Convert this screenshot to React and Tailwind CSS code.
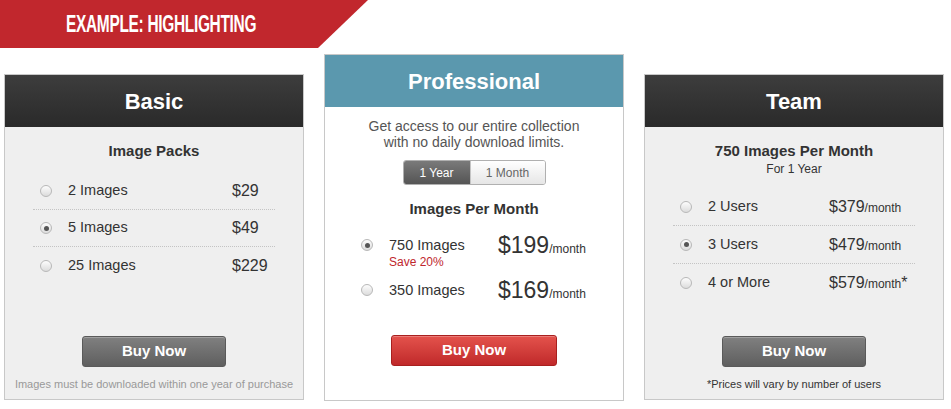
import React, { useState } from "react";

const font = { fontFamily: '"Liberation Sans", Arial, sans-serif' };

function Radio({ on }) {
  return (
    <span className="inline-flex items-center justify-center w-[12px] h-[12px] rounded-full border border-[#b8b8b8] bg-linear-to-b from-[#fdfdfd] to-[#dcdcdc] shrink-0">
      {on && <span className="w-[5px] h-[5px] rounded-full bg-[#555]" />}
    </span>
  );
}

function GrayButton({ className = "" }) {
  return (
    <button
      className={
        "h-[31px] rounded-[3px] border border-[#5a5a5a] bg-linear-to-b from-[#808080] to-[#5f5f5f] text-white font-bold text-[15px] shadow-[inset_0_1px_0_rgba(255,255,255,0.25)] " +
        className
      }
    >
      Buy Now
    </button>
  );
}

function DarkHeader({ title }) {
  return (
    <div className="h-[52px] bg-linear-to-b from-[#3d3d3d] to-[#2a2a2a] flex items-center justify-center">
      <span className="text-white font-bold text-[22px]">{title}</span>
    </div>
  );
}

export default function App() {
  const [basic, setBasic] = useState(1);
  const [pro, setPro] = useState(0);
  const [team, setTeam] = useState(1);
  const [term, setTerm] = useState("year");

  const basicRows = [
    ["2 Images", "$29"],
    ["5 Images", "$49"],
    ["25 Images", "$229"],
  ];
  const teamRows = [
    ["2 Users", "$379", ""],
    ["3 Users", "$479", ""],
    ["4 or More", "$579", "*"],
  ];

  return (
    <div className="w-[951px] h-[409px] bg-white overflow-hidden text-[#333]" style={font}>
      {/* banner */}
      <div className="w-[368px] h-[48px] bg-[#c1272d] [clip-path:polygon(0_0,368px_0,318px_100%,0_100%)] flex items-center pl-[66px]">
        <span className="text-white font-bold text-[24px] tracking-[-0.5px] inline-block origin-left scale-x-[0.645] whitespace-nowrap">
          EXAMPLE: HIGHLIGHTING
        </span>
      </div>

      <div className="flex items-start gap-[20px] pl-[4px] mt-[6px]">
        {/* Basic */}
        <div className="mt-[20px] w-[300px] h-[326px] border border-[#c8c8c8] bg-[#efefef] flex flex-col">
          <DarkHeader title="Basic" />
          <div className="flex-1 flex flex-col">
            <div className="pt-[14px] text-center font-bold text-[15px] leading-[20px]">Image Packs</div>
            <div className="mt-[12px] mx-[28px]">
              {basicRows.map(([label, price], i) => (
                <div
                  key={label}
                  onClick={() => setBasic(i)}
                  className={
                    "h-[37px] flex items-center pl-[7px] cursor-pointer " +
                    (i < 2 ? "border-b border-dotted border-[#c4c4c4]" : "")
                  }
                >
                  <Radio on={basic === i} />
                  <span className="ml-[16px] w-[164px] text-[14.5px]">{label}</span>
                  <span className="text-[16px]">{price}</span>
                </div>
              ))}
            </div>
            <div className="mt-auto flex justify-center">
              <GrayButton className="w-[144px]" />
            </div>
            <div className="mt-[10px] mb-[8px] text-center text-[11px] leading-[14px] text-[#999]">
              Images must be downloaded within one year of purchase
            </div>
          </div>
        </div>

        {/* Professional */}
        <div className="w-[300px] h-[347px] border border-[#c8c8c8] bg-white flex flex-col">
          <div className="h-[52px] bg-[#5b98ae] flex items-center justify-center">
            <span className="text-white font-bold text-[22px]">Professional</span>
          </div>
          <div className="flex-1 flex flex-col items-center">
            <div className="pt-[11px] text-center text-[14px] leading-[16px] text-[#555]">
              Get access to our entire collection
              <br />
              with no daily download limits.
            </div>
            <div className="mt-[10px] flex h-[25px] rounded-[3px] border border-[#b0b0b0] overflow-hidden text-[12px]">
              <button
                onClick={() => setTerm("year")}
                className={
                  "w-[66px] " +
                  (term === "year"
                    ? "bg-linear-to-b from-[#7a7a7a] to-[#555] text-white"
                    : "bg-linear-to-b from-white to-[#e6e6e6] text-[#666]")
                }
              >
                1 Year
              </button>
              <button
                onClick={() => setTerm("month")}
                className={
                  "w-[75px] border-l border-[#c4c4c4] " +
                  (term === "month"
                    ? "bg-linear-to-b from-[#7a7a7a] to-[#555] text-white"
                    : "bg-linear-to-b from-white to-[#e6e6e6] text-[#666]")
                }
              >
                1 Month
              </button>
            </div>
            <div className="mt-[14px] font-bold text-[15px] leading-[20px]">Images Per Month</div>
            <div className="self-stretch pl-[36px] mt-[17px]">
              <div className="flex items-start cursor-pointer" onClick={() => setPro(0)}>
                <div className="h-[18px] flex items-center">
                  <Radio on={pro === 0} />
                </div>
                <div className="ml-[16px] w-[109px]">
                  <div className="text-[14.5px] leading-[18px]">750 Images</div>
                  <div className="text-[12px] leading-[16px] text-[#c0272d]">Save 20%</div>
                </div>
                <div className="flex items-baseline -mt-[3px]">
                  <span className="text-[23px] leading-[24px]">$199</span>
                  <span className="text-[12px]">/month</span>
                </div>
              </div>
              <div className="flex items-start mt-[11px] cursor-pointer" onClick={() => setPro(1)}>
                <div className="h-[18px] flex items-center">
                  <Radio on={pro === 1} />
                </div>
                <div className="ml-[16px] w-[109px] text-[14.5px] leading-[18px]">350 Images</div>
                <div className="flex items-baseline -mt-[3px]">
                  <span className="text-[23px] leading-[24px]">$169</span>
                  <span className="text-[12px]">/month</span>
                </div>
              </div>
            </div>
            <button className="mt-[32px] w-[166px] h-[31px] rounded-[3px] border border-[#a8201f] bg-linear-to-b from-[#e4524c] to-[#c0282a] text-white font-bold text-[15px] shadow-[inset_0_1px_0_rgba(255,255,255,0.25)]">
              Buy Now
            </button>
          </div>
        </div>

        {/* Team */}
        <div className="mt-[20px] w-[300px] h-[326px] border border-[#c8c8c8] bg-[#efefef] flex flex-col">
          <DarkHeader title="Team" />
          <div className="flex-1 flex flex-col">
            <div className="pt-[14px] text-center font-bold text-[15px] leading-[20px]">750 Images Per Month</div>
            <div className="text-center text-[12px] leading-[14px] mt-[1px]">For 1 Year</div>
            <div className="mt-[12px] mx-[28px]">
              {teamRows.map(([label, price, star], i) => (
                <div
                  key={label}
                  onClick={() => setTeam(i)}
                  className={
                    "h-[38px] flex items-center pl-[7px] cursor-pointer " +
                    (i < 2 ? "border-b border-dotted border-[#c4c4c4]" : "")
                  }
                >
                  <Radio on={team === i} />
                  <span className="ml-[16px] w-[121px] text-[14.5px]">{label}</span>
                  <span className="text-[16px]">
                    {price}
                    <span className="text-[12px]">/month</span>
                    {star}
                  </span>
                </div>
              ))}
            </div>
            <div className="mt-auto flex justify-center">
              <GrayButton className="w-[144px]" />
            </div>
            <div className="mt-[10px] mb-[8px] text-center text-[11px] leading-[14px] text-[#333]">
              *Prices will vary by number of users
            </div>
          </div>
        </div>
      </div>
    </div>
  );
}
